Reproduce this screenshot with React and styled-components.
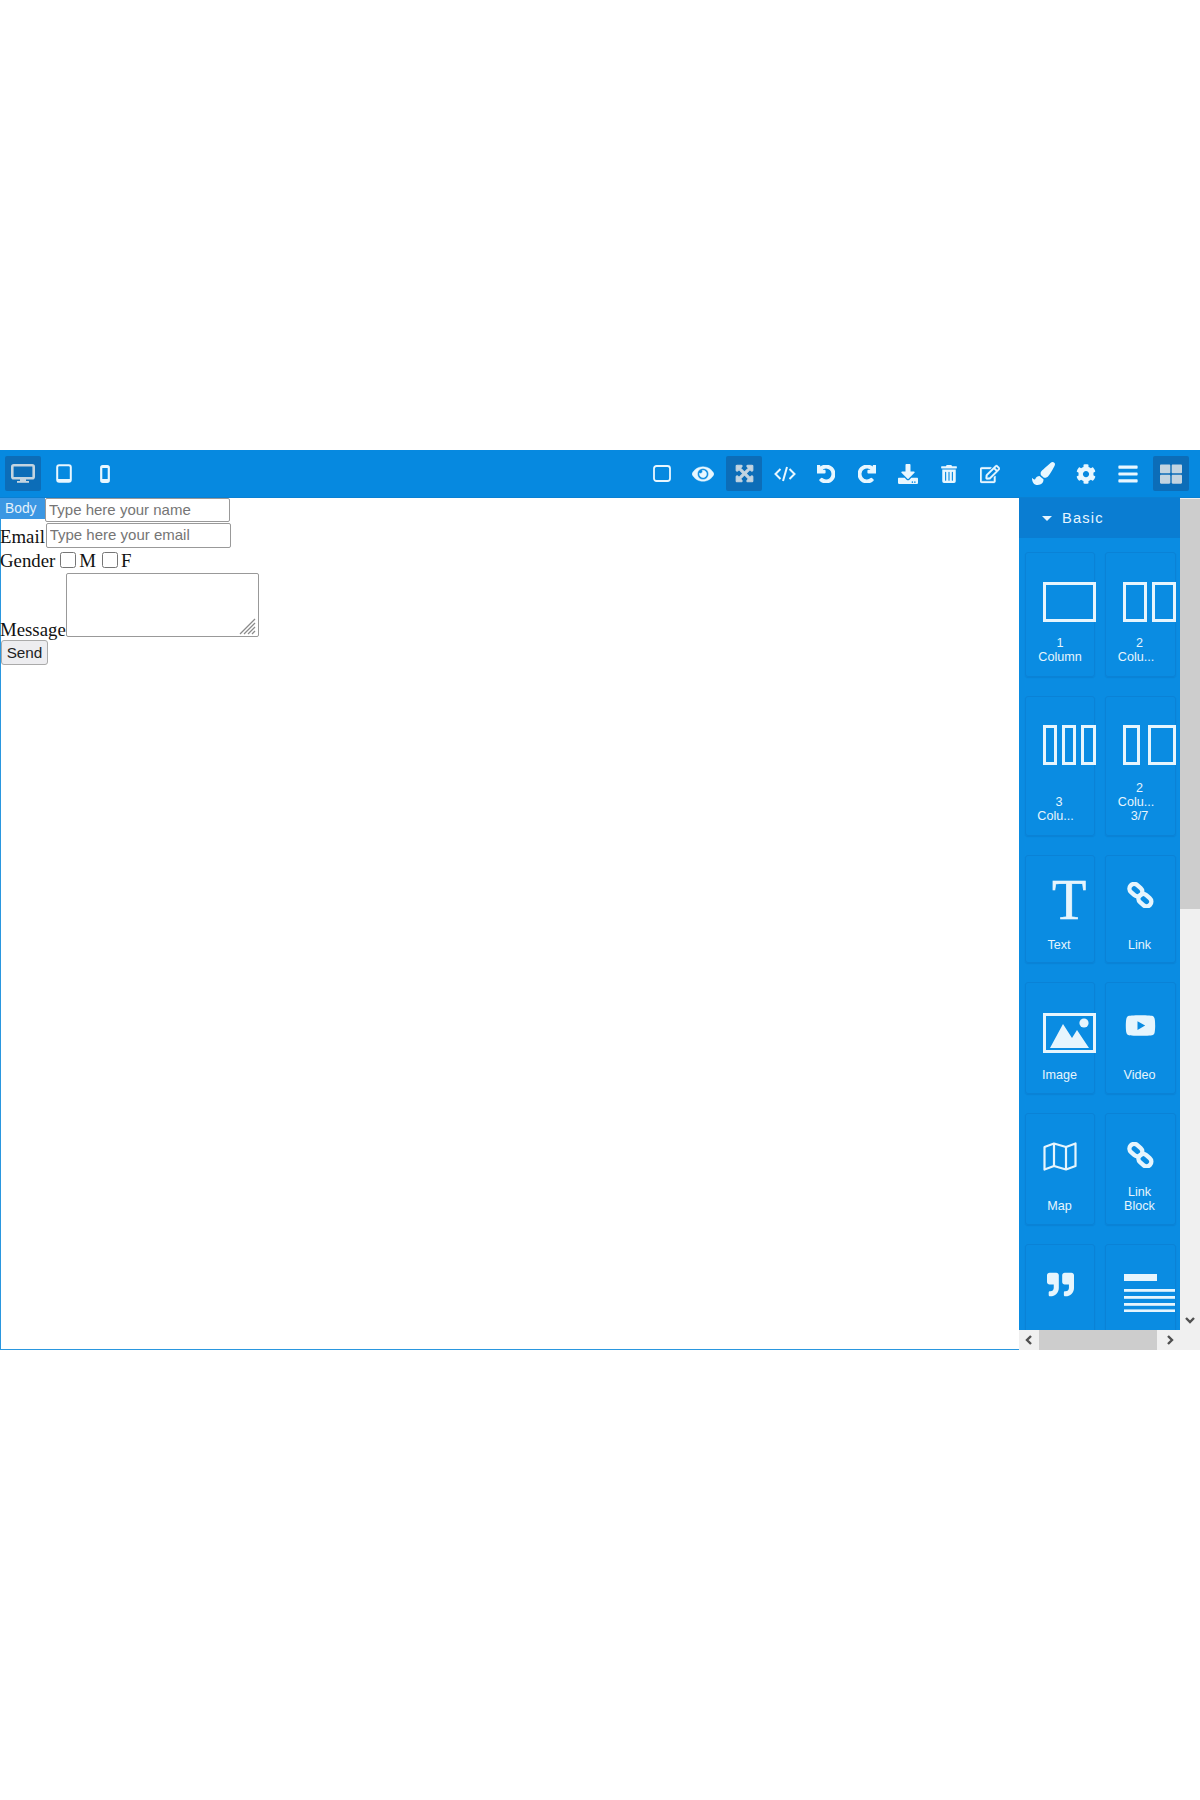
import React from "react";
import styled, { createGlobalStyle, css } from "styled-components";
import {
  FaEye, FaExpandArrowsAlt, FaUndo, FaRedo, FaDownload, FaTrashAlt, FaRegEdit,
  FaPaintBrush, FaCog, FaBars, FaThLarge, FaYoutube, FaQuoteRight,
} from "react-icons/fa";

const Global = createGlobalStyle`
  html, body { margin: 0; padding: 0; background: #fff; }
  * { box-sizing: border-box; }
`;

const Page = styled.div`
  height: 1800px;
  padding-top: 450px;
  background: #fff;
`;
const Editor = styled.div`
  height: 900px;
  display: flex;
  flex-direction: column;
  font-family: "Liberation Serif", serif;
`;
const Toolbar = styled.div`
  height: 48px;
  display: flex;
  align-items: flex-start;
  padding: 6px 10px 0 5px;
  background: #0689e0;
  box-shadow: inset 0 -1px 0 #0a80d2;
`;
const ToolGroup = styled.div`
  display: flex;
  gap: ${(p) => p.$gap}px;
  margin-left: ${(p) => p.$left || 0}px;
`;
const ToolButton = styled.div`
  width: 36px;
  height: 35px;
  display: flex;
  align-items: center;
  justify-content: center;
  border-radius: 2px;
  color: ${(p) => (p.$active ? "#c3d4e0" : "#e8f7ff")};
  background: ${(p) => (p.$active ? "#0c6db8" : "transparent")};
  font-size: ${(p) => p.$size || 20}px;
  ${(p) =>
    p.$heavy &&
    css`
      svg {
        stroke: currentColor;
        stroke-width: ${p.$heavy}px;
      }
    `}
`;
const Workspace = styled.div`
  flex: 1;
  display: flex;
  min-height: 0;
`;
const Canvas = styled.div`
  position: relative;
  width: 1019px;
  background: #fff;
  box-shadow: inset 1px 0 0 #2a97df, inset 0 -1px 0 #2a97df;
  color: #111;
  font-size: 18.8px;
  line-height: 21px;
`;
const BodyBadge = styled.div`
  position: absolute;
  left: 0;
  top: 0;
  width: 45px;
  height: 21px;
  padding-left: 5px;
  background: #3b97e3;
  color: #e4f1fb;
  font: 13.8px/21px "Liberation Sans", Arial, sans-serif;
`;
const FormRow = styled.div`
  display: flex;
  align-items: ${(p) => p.$align || "flex-end"};
  height: ${(p) => p.$h}px;
  margin-top: ${(p) => p.$top || 0}px;
`;
const Label = styled.label`
  margin-bottom: ${(p) => p.$drop || 0}px;
`;
const TextInput = styled.input`
  position: relative;
  width: 185px;
  height: ${(p) => p.$h}px;
  margin-left: ${(p) => p.$left || 0}px;
  padding: 0 3px 2px;
  border: 1px solid #999;
  border-radius: 2px;
  background: #fff;
  font: 15px "Liberation Sans", Arial, sans-serif;
  outline: none;
  &::placeholder { color: #757575; opacity: 1; }
`;
const Check = styled.input`
  width: 16px;
  height: 16px;
  margin: 0 3px 0 ${(p) => p.$left}px;
`;
const AreaWrap = styled.span`
  position: relative;
  display: block;
  width: 193px;
  height: 64px;
`;
const Area = styled.textarea`
  display: block;
  width: 100%;
  height: 100%;
  resize: none;
  border: 1px solid #999;
  border-radius: 2px;
  background: #fff;
  outline: none;
`;
const Grip = styled.svg`
  position: absolute;
  right: 3px;
  bottom: 2px;
  width: 17px;
  height: 17px;
`;
const SendButton = styled.button`
  display: block;
  width: 47px;
  height: 25px;
  margin: 3px 0 0 1px;
  padding: 0;
  border: 1px solid #aaa;
  border-radius: 3px;
  background: #ededf0;
  color: #222;
  font: 15.3px "Liberation Sans", Arial, sans-serif;
`;
const Side = styled.div`
  width: 181px;
  display: flex;
  flex-direction: column;
`;
const SideTop = styled.div`
  flex: 1;
  display: flex;
  min-height: 0;
`;
const Panel = styled.div`
  width: 161px;
  overflow: hidden;
  background: #0a8ce2;
  color: #e6f5ff;
  font-family: "Liberation Sans", Arial, sans-serif;
`;
const CategoryHead = styled.div`
  height: 40px;
  display: flex;
  align-items: center;
  padding-left: 23px;
  gap: 10px;
  background: #0a7dd2;
  font-size: 14.7px;
  letter-spacing: 1.15px;
`;
const Caret = styled.span`
  width: 0;
  height: 0;
  border-left: 5px solid transparent;
  border-right: 5px solid transparent;
  border-top: 5px solid #e6f5ff;
`;
const Grid = styled.div`
  display: grid;
  grid-template-columns: 70px 71px;
  column-gap: 10px;
  row-gap: 19px;
  padding: 14px 0 0 6px;
`;
const Card = styled.div`
  height: ${(p) => p.$h}px;
  display: flex;
  flex-direction: column;
  padding: ${(p) => p.$iconTop}px 0 ${(p) => p.$bottom}px ${(p) => p.$iconLeft}px;
  border: 1px solid #0a82d6;
  border-radius: 3px;
  box-shadow: 0 1px 1px rgba(0, 60, 120, 0.12);
  color: #e6f5fd;
  font-size: ${(p) => p.$size || 27}px;
  line-height: 0;
`;
const CardLabel = styled.div`
  margin-top: auto;
  margin-left: ${(p) => -p.$iconLeft}px;
  padding-right: ${(p) => p.$shift || 0}px;
  text-align: center;
  font-size: 12.6px;
  line-height: 14px;
  white-space: pre-line;
`;
const SerifT = styled.div`
  font: 56px/37px "Liberation Serif", serif;
  -webkit-text-stroke: 0.7px currentColor;
`;
const VBar = styled.div`
  width: 20px;
  display: flex;
  flex-direction: column;
  background: #f0f0f0;
`;
const VThumb = styled.div`
  height: 410px;
  margin-top: 1px;
  background: #cdcdcd;
`;
const BarArrow = styled.div`
  height: 20px;
  width: 20px;
  display: flex;
  align-items: center;
  justify-content: center;
  margin-top: ${(p) => (p.$push ? "auto" : "0")};
  flex: none;
`;
const HBar = styled.div`
  height: 20px;
  display: flex;
  padding-right: 20px;
  background: #f0f0f0;
`;
const HThumb = styled.div`
  width: 118px;
  background: #cdcdcd;
`;
const HSpace = styled.div`
  flex: 1;
`;

const Chevron = ({ dir }) => {
  const pts = {
    down: "2,4 6,8 10,4",
    left: "8,2 4,6 8,10",
    right: "4,2 8,6 4,10",
  }[dir];
  return (
    <svg width="12" height="12" viewBox="0 0 12 12">
      <polyline points={pts} fill="none" stroke="#505050" strokeWidth="2.4" />
    </svg>
  );
};

const Desktop = () => (
  <svg width="24" height="20" viewBox="0 0 24 20">
    <rect x="1.3" y="1.3" width="21.4" height="13" rx="1.5" fill="none" stroke="currentColor" strokeWidth="2.6" />
    <rect x="9" y="15" width="6" height="3" fill="currentColor" />
    <rect x="6" y="17" width="12" height="1.8" fill="currentColor" />
  </svg>
);
const Tablet = () => (
  <svg width="16" height="19" viewBox="0 0 16 19">
    <rect x="1.2" y="1.2" width="13.6" height="16.6" rx="2" fill="none" stroke="currentColor" strokeWidth="2" />
    <rect x="2" y="15" width="12" height="3" fill="currentColor" />
  </svg>
);
const Mobile = () => (
  <svg width="10" height="18" viewBox="0 0 10 18">
    <rect x="1.2" y="1.2" width="7.6" height="15.6" rx="1.5" fill="none" stroke="currentColor" strokeWidth="2.2" />
    <rect x="1" y="14" width="8" height="3" fill="currentColor" />
    <rect x="1" y="1" width="8" height="2" fill="currentColor" />
  </svg>
);
const SquareOutline = () => (
  <svg width="18" height="17" viewBox="0 0 18 17">
    <rect x="1" y="1" width="16" height="15" rx="2.5" fill="none" stroke="currentColor" strokeWidth="1.8" />
  </svg>
);
const CodeGlyph = () => (
  <svg width="22" height="16" viewBox="0 0 22 16" fill="none" stroke="currentColor" strokeWidth="2">
    <polyline points="6.5,3 1.5,8 6.5,13" />
    <polyline points="15.5,3 20.5,8 15.5,13" />
    <line x1="13" y1="1" x2="9" y2="15" />
  </svg>
);
const Columns = ({ boxes }) => (
  <svg width="53" height="40" viewBox="0 0 53 40" fill="none" stroke="currentColor" strokeWidth="3">
    {boxes.map(([x, w]) => (
      <rect key={x} x={x + 1.5} y="1.5" width={w - 3} height="37" />
    ))}
  </svg>
);
const ImageGlyph = () => (
  <svg width="53" height="40" viewBox="0 0 53 40">
    <rect x="1.5" y="1.5" width="50" height="37" fill="none" stroke="currentColor" strokeWidth="3" />
    <circle cx="41" cy="10" r="4.6" fill="currentColor" />
    <path d="M7 35 L20 11 L29 25 L34 17 L46 35 Z" fill="currentColor" />
  </svg>
);
const ChainGlyph = () => (
  <svg width="27" height="26" viewBox="0 0 27 26" fill="none" stroke="currentColor" strokeWidth="4.4">
    <rect x="2" y="3.5" width="14" height="9.4" rx="4.7" transform="rotate(42 9 8)" />
    <rect x="11" y="13.5" width="14" height="9.4" rx="4.7" transform="rotate(42 18 18)" />
  </svg>
);
const MapGlyph = () => (
  <svg width="34" height="29" viewBox="0 0 34 29" fill="none" stroke="currentColor" strokeWidth="2.2" strokeLinejoin="round">
    <path d="M1.5 5 L11 1.5 L23 5 L32.5 1.5 V24 L23 27.5 L11 24 L1.5 27.5 Z" />
    <line x1="11" y1="1.5" x2="11" y2="24" />
    <line x1="23" y1="5" x2="23" y2="27.5" />
  </svg>
);
const TextSection = () => (
  <svg width="51" height="38" viewBox="0 0 51 38" fill="currentColor">
    <rect x="0" y="0" width="33" height="7" />
    <rect x="0" y="15" width="51" height="2.8" />
    <rect x="0" y="22" width="51" height="2.8" />
    <rect x="0" y="29" width="51" height="2.8" />
    <rect x="0" y="35.4" width="51" height="2.6" />
  </svg>
);

const COLU = "Colu...\u00A0\u00A0";

const blocks = [
  { h: 125, top: 29, left: 17, pb: 12, label: "1\nColumn", icon: <Columns boxes={[[0, 53]]} /> },
  { h: 125, top: 29, left: 17, pb: 12, shift: 2, label: "2\n" + COLU, icon: <Columns boxes={[[0, 24], [29, 24]]} /> },
  { h: 140, top: 28, left: 17, pb: 12, shift: 2, label: "3\n" + COLU, icon: <Columns boxes={[[0, 14], [19, 14], [38, 15]]} /> },
  { h: 140, top: 28, left: 17, pb: 12, shift: 2, label: "2\n" + COLU + "\n3/7", icon: <Columns boxes={[[0, 17], [25, 28]]} /> },
  { h: 108, top: 26, left: 26, pb: 10, shift: 2, label: "Text", icon: <SerifT>T</SerifT> },
  { h: 108, top: 26, left: 21, pb: 10, shift: 2, label: "Link", icon: <ChainGlyph /> },
  { h: 112, top: 30, left: 17, pb: 11, shift: 1, label: "Image", icon: <ImageGlyph /> },
  { h: 112, top: 27, left: 19, pb: 11, shift: 2, size: 31, label: "Video", icon: <FaYoutube /> },
  { h: 112, top: 28, left: 17, pb: 11, shift: 1, label: "Map", icon: <MapGlyph /> },
  { h: 112, top: 28, left: 21, pb: 11, shift: 2, label: "Link\nBlock", icon: <ChainGlyph /> },
  { h: 112, top: 26, left: 21, pb: 12, label: "", icon: <FaQuoteRight /> },
  { h: 112, top: 29, left: 18, pb: 12, label: "", icon: <TextSection /> },
];

export default function App() {
  return (
    <Page>
      <Global />
      <Editor>
        <Toolbar>
          <ToolGroup $gap={5}>
            <ToolButton $active><Desktop /></ToolButton>
            <ToolButton><Tablet /></ToolButton>
            <ToolButton><Mobile /></ToolButton>
          </ToolGroup>
          <ToolGroup $gap={5} $left={521}>
            <ToolButton><SquareOutline /></ToolButton>
            <ToolButton $size={22} $heavy={10}><FaEye /></ToolButton>
            <ToolButton $active $size={19} $heavy={30}><FaExpandArrowsAlt /></ToolButton>
            <ToolButton><CodeGlyph /></ToolButton>
            <ToolButton $size={18} $heavy={40}><FaUndo /></ToolButton>
            <ToolButton $size={18} $heavy={40}><FaRedo /></ToolButton>
            <ToolButton $size={20}><FaDownload /></ToolButton>
            <ToolButton $size={18}><FaTrashAlt /></ToolButton>
            <ToolButton $size={20} $heavy={10}><FaRegEdit /></ToolButton>
          </ToolGroup>
          <ToolGroup $gap={6.67} $left={17}>
            <ToolButton $size={23}><FaPaintBrush /></ToolButton>
            <ToolButton $size={20}><FaCog /></ToolButton>
            <ToolButton $size={22}><FaBars /></ToolButton>
            <ToolButton $active $size={22}><FaThLarge /></ToolButton>
          </ToolGroup>
        </Toolbar>
        <Workspace>
          <Canvas>
            <BodyBadge>Body</BodyBadge>
            <FormRow $h={24}>
              <TextInput $h={24} $left={45} placeholder="Type here your name" />
            </FormRow>
            <FormRow $h={25} $top={1}>
              <Label $drop={1}>Email</Label>
              <TextInput $h={25} $left={0.8} placeholder="Type here your email" />
            </FormRow>
            <FormRow $h={22} $top={1} $align="center">
              <Label>Gender</Label>
              <Check type="checkbox" $left={5} />
              <Label>M</Label>
              <Check type="checkbox" $left={6} />
              <Label>F</Label>
            </FormRow>
            <FormRow $h={64} $top={2}>
              <Label $drop={-3}>Message</Label>
              <AreaWrap>
                <Area />
                <Grip viewBox="0 0 17 17" fill="none" stroke="#8a8a8a" strokeWidth="1.3">
                  <line x1="1" y1="16" x2="16" y2="1" />
                  <line x1="5" y1="16" x2="16" y2="5" />
                  <line x1="9" y1="16" x2="16" y2="9" />
                  <line x1="13" y1="16" x2="16" y2="13" />
                </Grip>
              </AreaWrap>
            </FormRow>
            <SendButton>Send</SendButton>
          </Canvas>
          <Side>
            <SideTop>
              <Panel>
                <CategoryHead><Caret />Basic</CategoryHead>
                <Grid>
                  {blocks.map((b, i) => (
                    <Card key={i} $h={b.h} $iconTop={b.top} $iconLeft={b.left} $bottom={b.pb} $size={b.size}>
                      <div>{b.icon}</div>
                      <CardLabel $iconLeft={b.left} $shift={b.shift}>{b.label}</CardLabel>
                    </Card>
                  ))}
                </Grid>
              </Panel>
              <VBar>
                <VThumb />
                <BarArrow $push><Chevron dir="down" /></BarArrow>
              </VBar>
            </SideTop>
            <HBar>
              <BarArrow><Chevron dir="left" /></BarArrow>
              <HThumb />
              <HSpace />
              <BarArrow><Chevron dir="right" /></BarArrow>
            </HBar>
          </Side>
        </Workspace>
      </Editor>
    </Page>
  );
}
